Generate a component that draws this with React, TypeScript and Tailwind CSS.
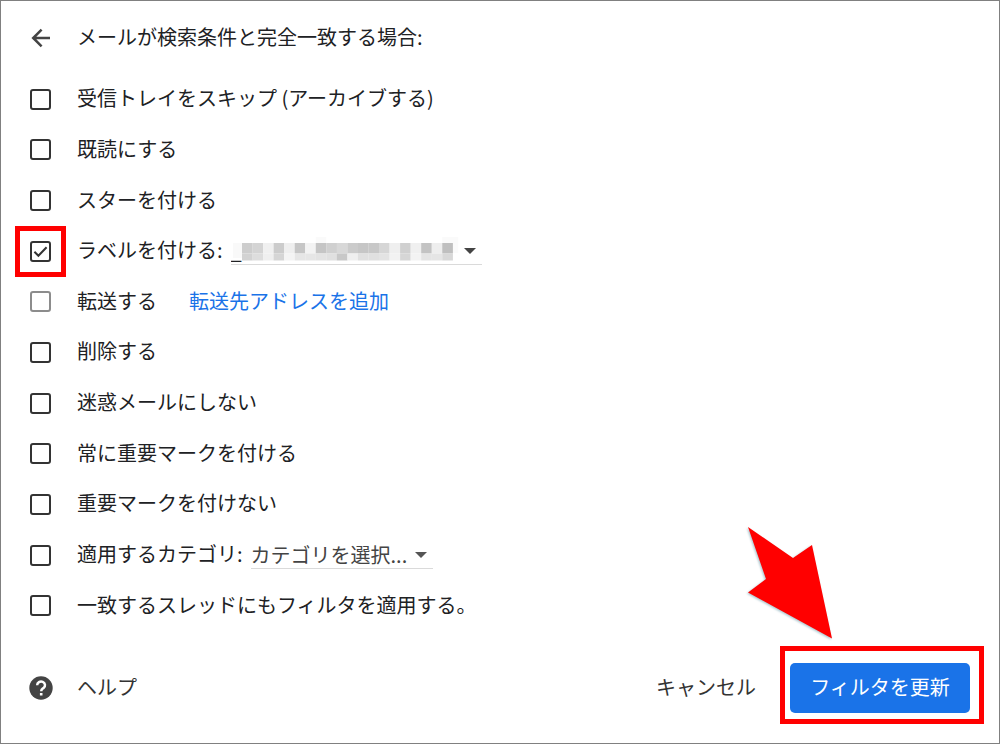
import React, { useState } from "react";

type Row = {
  id: string;
  label: string;
  checked?: boolean;
  disabled?: boolean;
  extra?: React.ReactNode;
};

function Caret({ className }: { className: string }) {
  return (
    <svg viewBox="0 0 12 6" className={`pointer-events-none absolute right-1.5 top-2.5 h-1.5 w-3 ${className}`} aria-hidden="true">
      <path d="M0 0h12L6 6z" fill="currentColor" />
    </svg>
  );
}

const mosaicTop = [
  "#cdcdcd", "#d4d4d4", "#f0f0f0", "#cccccc", "#efefef", "#c6c6c6", "#f3f3f3", "#c5c5c5", "#d0d0d0", "#d8d8d8",
  "#cbcbcb", "#c6c6c6", "#c8c8c8", "#d6d6d6", "#efefef", "#d0d0d0", "#f0f0f0", "#c3c3c3", "#eeeeee", "#bfbfbf",
];
const mosaicBottom = [
  "#d2d2d2", "#dddddd", "#efefef", "#d5d5d5", "#f4f4f4", "#e6e6e6", "#e6e6e6", "#e3e3e3", "#e0e0e0", "#c8c8c8",
  "#efefef", "#e0e0e0", "#e0e0e0", "#e3e3e3", "#f2f2f2", "#d6d6d6", "#f3f3f3", "#e4e4e4", "#e5e5e5", "#d8d8d8",
];

// Hides the real label name
function Mosaic() {
  const w = 10.54;
  return (
    <svg viewBox="0 0 228 24" className="pointer-events-none absolute left-0.5 -top-px h-6 w-57" aria-hidden="true">
      <rect x="0" y="6" width="9" height="15" fill="#f9f9f9" />
      <rect x={9 + w * 7} y="0" width={w} height="6" fill="#fafafa" />
      <rect x={9 + w * 19} y="0" width="16" height="16" fill="#fafafa" />
      {mosaicTop.map((c, i) => (
        <rect key={i} x={9 + w * i} y="6" width={w + 0.1} height="10.5" fill={c} />
      ))}
      {mosaicBottom.map((c, i) => (
        <rect key={i} x={9 + w * i} y="16.5" width={w + 0.1} height="7" fill={c} />
      ))}
    </svg>
  );
}

function LabelSelect() {
  return (
    <div className="relative ml-2 w-[251px] border-b border-[#dadada]">
      <select aria-label="ラベルを付ける" className="block h-[26px] w-full appearance-none bg-transparent leading-6 text-[#202124] outline-none">
        <option>_</option>
      </select>
      <Mosaic />
      <Caret className="text-[#444444]" />
    </div>
  );
}

function CategorySelect() {
  return (
    <div className="relative ml-2 w-[182px] border-b border-[#dadada]">
      <select aria-label="適用するカテゴリ" className="block h-[26px] w-full appearance-none bg-transparent leading-6 text-[#444444] outline-none">
        <option>カテゴリを選択...</option>
      </select>
      <Caret className="text-[#555555]" />
    </div>
  );
}

const rows: Row[] = [
  { id: "skip", label: "受信トレイをスキップ (アーカイブする)" },
  { id: "read", label: "既読にする" },
  { id: "star", label: "スターを付ける" },
  { id: "label", label: "ラベルを付ける:", checked: true, extra: <LabelSelect /> },
  {
    id: "forward",
    label: "転送する",
    disabled: true,
    extra: <a href="#forward" className="ml-8 pb-0.5 text-[#1a73e8]">転送先アドレスを追加</a>,
  },
  { id: "delete", label: "削除する" },
  { id: "nospam", label: "迷惑メールにしない" },
  { id: "important", label: "常に重要マークを付ける" },
  { id: "unimportant", label: "重要マークを付けない" },
  { id: "category", label: "適用するカテゴリ:", extra: <CategorySelect /> },
  { id: "threads", label: "一致するスレッドにもフィルタを適用する。" },
];

function FilterRow({ row }: { row: Row }) {
  const [checked, setChecked] = useState(!!row.checked);
  return (
    <li className="flex items-center">
      <span className="relative mr-[26px] grid size-[21px] place-items-center">
        <input
          id={row.id}
          type="checkbox"
          checked={checked}
          disabled={row.disabled}
          onChange={() => setChecked(!checked)}
          className="col-start-1 row-start-1 size-[21px] appearance-none rounded-[3px] border-2 border-[#333333] disabled:border-[#8c8c8c]"
        />
        {checked && (
          <svg viewBox="0 0 21 21" className="pointer-events-none col-start-1 row-start-1 size-[21px]" aria-hidden="true">
            <path d="M4.4 10.8l4 4L16.6 6.2" fill="none" stroke="#333333" strokeWidth="2" />
          </svg>
        )}
        {row.checked && <span className="pointer-events-none absolute -inset-[15px] border-5 border-[#ff0000]" />}
      </span>
      <label htmlFor={row.id} className="pb-0.5">{row.label}</label>
      {row.extra}
    </li>
  );
}

export default function App() {
  return (
    <form
      onSubmit={(e) => e.preventDefault()}
      className="flex min-h-screen flex-col border border-[#808080] bg-white px-[29px] font-['Noto_Sans_CJK_JP',sans-serif] text-xl leading-7 text-[#202124]"
    >
      <header className="flex h-[73px] items-center">
        <button type="button" aria-label="戻る" className="mr-[26px] size-[21px]">
          <svg viewBox="0 0 21 21" className="size-[21px]" fill="none" stroke="#444444" strokeWidth="2.5" aria-hidden="true">
            <path d="M20 11H3.4M11.6 2.6L3.2 11l8.4 8.4" />
          </svg>
        </button>
        <h1 className="pb-0.5">メールが検索条件と完全一致する場合:</h1>
      </header>

      <ul className="grid flex-1 auto-rows-fr">
        {rows.map((row) => (
          <FilterRow key={row.id} row={row} />
        ))}
      </ul>

      <footer className="flex h-28 items-center pt-0.5 text-[#333333]">
        <a href="#help" className="flex items-center">
          <svg viewBox="0 0 24 24" className="-ml-px mr-6 size-6" aria-hidden="true">
            <circle cx="12" cy="12" r="11.7" fill="#444444" />
            <path d="M8.2 9.2a3.9 3.6 0 1 1 6.4 2.7c-1.5 1.2-2.4 1.6-2.4 3.4" fill="none" stroke="#ffffff" strokeWidth="2.5" />
            <path d="M10.9 17h2.6v2.5h-2.6z" fill="#ffffff" />
          </svg>
          <span className="pb-0.5">ヘルプ</span>
        </a>
        <button type="button" className="ml-auto mr-[34px] pb-0.5">キャンセル</button>
        <div className="relative">
          <button type="submit" className="block h-[50px] w-[180px] rounded-[5px] bg-[#1a73e8] pb-0.5 text-white">
            フィルタを更新
          </button>
          <span className="pointer-events-none absolute -bottom-[11px] -left-[10px] -right-[14px] -top-[17px] border-5 border-[#ff0000]" />
          <svg
            viewBox="0 0 90 116"
            className="pointer-events-none absolute -left-11 -top-[138px] h-[116px] w-[90px] drop-shadow-[-1px_1px_1px_#a8c4cc]"
            aria-hidden="true"
          >
            <path d="M2 2L47 33L66 20L86 113.5L2 67.5L20 54z" fill="#ff0000" />
          </svg>
        </div>
      </footer>
    </form>
  );
}
